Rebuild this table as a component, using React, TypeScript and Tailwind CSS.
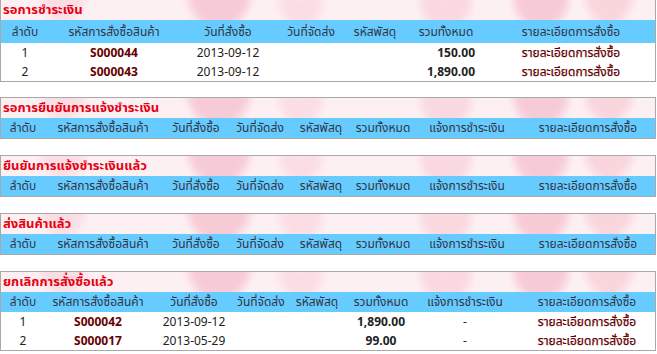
import React from "react";

const FONT = "font-['Tahoma','Noto_Sans_Thai','Loma','Garuda','DejaVu_Sans',sans-serif]";

type Row = { no: string; code: string; date: string; total: string };

const HEART = "M0 14 C -24 0 -22 -18 -8 -18 C -3 -18 0 -14 0 -11 C 0 -14 3 -18 8 -18 C 22 -18 24 0 0 14 Z";

function Hearts() {
  const hearts = [
    { x: 62, y: 10, s: 1.2, o: 0.3 },
    { x: 218, y: 12, s: 1.7, o: 0.6 },
    { x: 300, y: 14, s: 1.2, o: 0.3 },
    { x: 445, y: 16, s: 1.4, o: 0.4 },
    { x: 540, y: 14, s: 1.5, o: 0.6 },
    { x: 608, y: 10, s: 1.3, o: 0.45 },
  ];
  return (
    <svg className="pointer-events-none absolute inset-0 h-full w-full" viewBox="0 0 654 20" preserveAspectRatio="xMinYMin slice">
      <defs>
        <filter id="soft" x="-50%" y="-50%" width="200%" height="200%">
          <feGaussianBlur stdDeviation="4" />
        </filter>
      </defs>
      <rect width="654" height="20" fill="#fdf0f3" />
      <g filter="url(#soft)">
        {hearts.map((h, i) => (
          <path key={i} d={HEART} fill="#f4b3c2" opacity={h.o} transform={`translate(${h.x} ${h.y}) scale(${h.s})`} />
        ))}
      </g>
    </svg>
  );
}

function Title({ text }: { text: string }) {
  return (
    <div className="relative h-5 overflow-hidden">
      <Hearts />
      <div className="relative pl-[2px] text-[13px] font-bold leading-5 text-[#e60012]">{text}</div>
    </div>
  );
}

function Section({
  title,
  cols,
  widths,
  rows,
  withPay,
  headH,
  totalAlign,
  first,
}: {
  title: string;
  cols: string[];
  widths: number[];
  rows: Row[];
  withPay: boolean;
  headH: string;
  totalAlign: string;
  first?: boolean;
}) {
  return (
    <div className={`border border-[#a9a9a9] bg-white ${first ? "-mt-px" : ""}`}>
      <Title text={title} />
      <table className="w-full table-fixed border-collapse">
        <colgroup>
          {widths.map((w, i) => (
            <col key={i} style={{ width: w }} />
          ))}
        </colgroup>
        <thead>
          <tr className={`${headH} bg-[#66ccff]`}>
            {cols.map((c) => (
              <th key={c} className="whitespace-nowrap p-0 text-center text-[12px] font-normal text-[#333344]">
                {c}
              </th>
            ))}
          </tr>
        </thead>
        <tbody>
          {rows.map((r) => (
            <tr key={r.code} className="h-[19px] text-[12px] text-[#222]">
              <td className="p-0 text-center">{r.no}</td>
              <td className="p-0 text-center font-bold text-[#660000]">{r.code}</td>
              <td className="p-0 text-center">{r.date}</td>
              <td className="p-0"></td>
              <td className="p-0"></td>
              <td className={`p-0 font-bold text-[#222] ${totalAlign}`}>{r.total}</td>
              {withPay && <td className="p-0 text-center">-</td>}
              <td className="whitespace-nowrap p-0 text-center text-[#660000] [-webkit-text-stroke:0.25px_#660000]">
                รายละเอียดการสั่งซื้อ
              </td>
            </tr>
          ))}
        </tbody>
      </table>
    </div>
  );
}

const COLS6 = ["ลำดับ", "รหัสการสั่งซื้อสินค้า", "วันที่สั่งซื้อ", "วันที่จัดส่ง", "รหัสพัสดุ", "รวมทั้งหมด", "รายละเอียดการสั่งซื้อ"];
const COLS8 = ["ลำดับ", "รหัสการสั่งซื้อสินค้า", "วันที่สั่งซื้อ", "วันที่จัดส่ง", "รหัสพัสดุ", "รวมทั้งหมด", "แจ้งการชำระเงิน", "รายละเอียดการสั่งซื้อ"];

export default function App() {
  return (
    <div className={`w-[656px] bg-white ${FONT}`}>
      <Section
        first
        title="รอการชำระเงิน"
        cols={COLS6}
        widths={[48, 130, 98, 68, 60, 82, 168]}
        rows={[
          { no: "1", code: "S000044", date: "2013-09-12", total: "150.00" },
          { no: "2", code: "S000043", date: "2013-09-12", total: "1,890.00" },
        ]}
        withPay={false}
        headH="h-[23px]"
        totalAlign="text-right pr-3"
      />
      <div className="mt-[15px] flex flex-col gap-4">
        {["รอการยืนยันการแจ้งชำระเงิน", "ยืนยันการแจ้งชำระเงินแล้ว", "ส่งสินค้าแล้ว"].map((t) => (
          <Section
            key={t}
            title={t}
            cols={COLS8}
            widths={[44, 116, 70, 58, 64, 60, 108, 134]}
            rows={[]}
            withPay
            headH="h-5"
            totalAlign="text-center"
          />
        ))}
        <Section
          title="ยกเลิกการสั่งซื้อแล้ว"
          cols={COLS8}
          widths={[44, 106, 86, 46, 68, 60, 108, 136]}
          rows={[
            { no: "1", code: "S000042", date: "2013-09-12", total: "1,890.00" },
            { no: "2", code: "S000017", date: "2013-05-29", total: "99.00" },
          ]}
          withPay
          headH="h-5"
          totalAlign="text-center"
        />
      </div>
    </div>
  );
}
